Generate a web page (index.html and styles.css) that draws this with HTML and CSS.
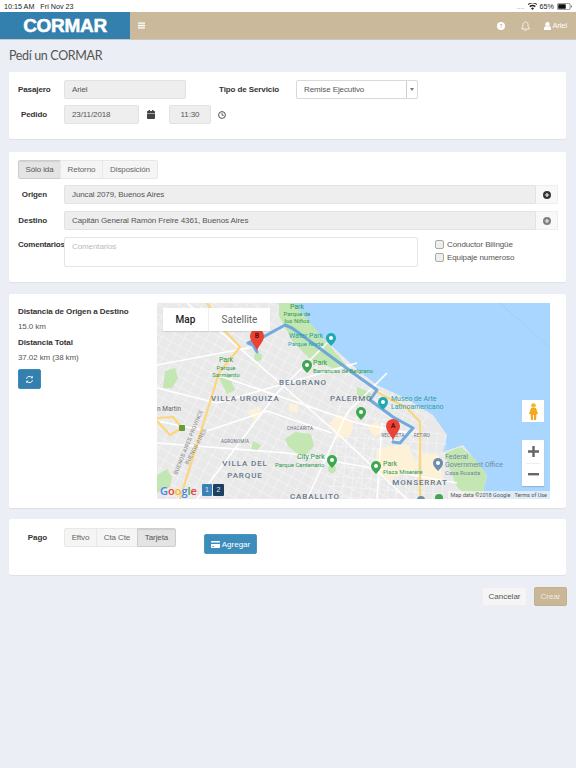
FILE: index.html
```html
<!DOCTYPE html>
<html lang="es">
<head>
  <meta charset="UTF-8" />
  <title>Pedí un CORMAR</title>
  <link rel="stylesheet" href="styles.css">
</head>
<body>

  <!-- iPad status bar -->
  <div class="status-bar">
    <span>10:15 AM&nbsp;&nbsp;&nbsp;Fri Nov 23</span>
    <span class="status-right">
      <span class="dots">....</span>
      <svg width="9" height="7" viewBox="0 0 18 14"><path d="M9 14l3-3.6a4.6 4.6 0 0 0-6 0zM4.500 8.600a7 7 0 0 1 9 0l2-2.400a10 10 0 0 0-13 0zM.5 3.800a13 13 0 0 1 17 0l1-1.300a15 15 0 0 0-19 0z" fill="#222"/></svg>
      65%
      <svg width="15" height="7" viewBox="0 0 30 14"><rect x=".7" y=".7" width="25.600" height="12.600" rx="3" fill="none" stroke="#444" stroke-width="1.2"/><rect x="2.500" y="2.500" width="15" height="9" rx="1" fill="#111"/><path d="M28 5v4c1 0 1.500-1 1.500-2s-.5-2-1.500-2z" fill="#444"/></svg>
    </span>
  </div>

  <!-- Header -->
  <header class="navbar">
    <div class="logo">CORMAR</div>
    <div class="nav-main">
      <svg class="bars" width="7" height="7" viewBox="0 0 14 14"><path d="M0 1h14v2.600H0zM0 5.700h14v2.600H0zM0 10.400h14V13H0z" fill="#fff"/></svg>
      <div class="nav-right">
        <svg width="8" height="8" viewBox="0 0 16 16"><circle cx="8" cy="8" r="8" fill="#fff"/><path d="M5.300 6.200C5.500 4.600 6.600 3.800 8.100 3.800c1.600 0 2.700.9 2.700 2.200 0 1.900-2.100 1.800-2.100 3.400H7.200c0-2.400 2-2.300 2-3.400 0-.6-.5-1-1.100-1-.7 0-1.100.4-1.300 1.200zM7.200 10.300h1.600v1.700H7.200z" fill="#cbb99c"/></svg>
        <svg width="9" height="10" viewBox="0 0 18 20"><path d="M9 2c-3 0-5 2-5 5 0 5-1 6-3 9h16c-2-3-3-4-3-9 0-3-2-5-5-5zM7 17.500c0 1 1 1.800 2 1.800s2-.8 2-1.800" fill="none" stroke="#fff" stroke-width="1.500"/></svg>
        <span class="nav-user">
          <svg width="7" height="8" viewBox="0 0 14 16"><circle cx="7" cy="4.500" r="4.300" fill="#fff"/><path d="M0 16v-3c0-3 2-5 4-5 1 .7 2 1 3 1s2-.3 3-1c2 0 4 2 4 5v3z" fill="#fff"/></svg>
          Ariel
        </span>
      </div>
    </div>
  </header>

  <div class="page">
    <h1>Pedí un CORMAR</h1>

    <!-- Pasajero -->
    <section class="panel panel-top">
      <div class="form-row">
        <label class="field-label">Pasajero</label>
        <div class="input disabled w-pasajero">Ariel</div>
        <label class="tipo-label">Tipo de Servicio</label>
        <div class="select-box">
          <span class="select-value">Remise Ejecutivo</span>
          <span class="select-arrow"></span>
        </div>
      </div>
      <div class="form-row">
        <label class="field-label short">Pedido</label>
        <div class="input disabled w-fecha">23/11/2018</div>
        <svg class="cal-icon" width="8" height="9" viewBox="0 0 16 18"><path d="M0 7h16v9.500c0 .8-.7 1.500-1.500 1.500h-13C.7 18 0 17.300 0 16.500zM1.500 2H3V0h3v2h4V0h3v2h1.500c.8 0 1.500.7 1.500 1.500V6H0V3.500C0 2.700.7 2 1.500 2z" fill="#444"/></svg>
        <div class="input disabled w-hora">11:30</div>
        <svg class="clock-icon" width="8" height="8" viewBox="0 0 16 16"><circle cx="8" cy="8" r="6.800" fill="none" stroke="#333" stroke-width="1.700"/><path d="M8 3.800V8.500h3.500" fill="none" stroke="#333" stroke-width="1.500"/></svg>
      </div>
    </section>

    <!-- Viaje -->
    <section class="panel panel-trip">
      <div class="btn-group">
        <span class="btn-opt active">Sólo ida</span>
        <span class="btn-opt w-retorno">Retorno</span>
        <span class="btn-opt w-dispo">Disposición</span>
      </div>
      <div class="form-row">
        <label class="field-label short">Origen</label>
        <div class="input-group">
          <div class="input disabled grow">Juncal 2079, Buenos Aires</div>
          <span class="addon">
            <svg width="8" height="8" viewBox="0 0 16 16"><circle cx="8" cy="8" r="8" fill="#333"/><path d="M6.800 3.800h2.400v3h3v2.400h-3v3H6.800v-3h-3V6.800h3z" fill="#eee"/></svg>
          </span>
        </div>
      </div>
      <div class="form-row">
        <label class="field-label short">Destino</label>
        <div class="input-group">
          <div class="input disabled grow">Capitán General Ramón Freire 4361, Buenos Aires</div>
          <span class="addon">
            <svg width="8" height="8" viewBox="0 0 16 16"><circle cx="8" cy="8" r="8" fill="#808080"/><path d="M6.800 3.800h2.400v3h3v2.400h-3v3H6.800v-3h-3V6.800h3z" fill="#eee"/></svg>
          </span>
        </div>
      </div>
      <div class="form-row comments-row">
        <label class="field-label comments-label">Comentarios</label>
        <div class="textarea">Comentarios</div>
        <div class="checks">
          <div class="check"><span class="check-box"></span>Conductor Bilingüe</div>
          <div class="check"><span class="check-box"></span>Equipaje numeroso</div>
        </div>
      </div>
    </section>

    <!-- Mapa -->
    <section class="panel panel-map">
      <div class="distance">
        <h4>Distancia de Origen a Destino</h4>
        <p>15.0 km</p>
        <h4>Distancia Total</h4>
        <p>37.02 km (38 km)</p>
        <button class="btn-refresh">
          <svg width="9" height="9" viewBox="0 0 18 18"><path d="M3 7.500A6.300 6.300 0 0 1 14 5M15 10.500A6.300 6.300 0 0 1 4 13" fill="none" stroke="#fff" stroke-width="2"/><path d="M15.500 1.500v5h-5zM2.500 16.500v-5h5z" fill="#fff"/></svg>
        </button>
      </div>

      <div class="map">
        <svg class="map-canvas" width="393" height="196" viewBox="0 0 393 196">
          <defs>
            <pattern id="streets-a" width="10" height="9" patternUnits="userSpaceOnUse" patternTransform="rotate(28)">
              <path d="M0 0H10M0 0V9" stroke="#fff" stroke-width=".7" fill="none"/>
            </pattern>
            <pattern id="streets-b" width="9" height="10" patternUnits="userSpaceOnUse" patternTransform="rotate(4)">
              <path d="M0 0H9M0 0V10" stroke="#fff" stroke-width=".7" fill="none"/>
            </pattern>
          </defs>

          <!-- land -->
          <rect width="393" height="196" fill="#a9d6fe"/>
          <path d="M0 0H121L136 12 166 35 203 69 220 82 250 96 276 112 290 132 286 149 306 142 330 172 326 189 330 196H0z" fill="#e9e9e9"/>
          <path d="M0 0H121L136 12 166 35 203 69 220 82 250 96 276 112 262 140 263 196H0z" fill="url(#streets-a)"/>
          <path d="M180 100L262 125 290 132 286 196H170z" fill="url(#streets-b)"/>

          <!-- parks -->
          <g fill="#c3e6b2">
            <path d="M288 150l16-6 14 12 12 16-4 17-14 5-12-10-8-20z"/>
            <path d="M122 0h14l30 35 24 28-14 2-22-8-18-18-14-26z"/>
            <path d="M8 68l10-3 3 10-6 10-9 0z"/>
            <path d="M128 136l10-7 16 2 3 12-9 10-10-4-7-6z"/>
            <path d="M62 75l10-2 6 14-8 4z"/>
            <circle cx="101" cy="54" r="4"/>
            <path d="M0 172l10-6 5 8-2 10-13 6z"/>
            <path d="M96 138l8 4-4 6-6-2z"/>
            <path d="M200 84l14 6-2 6-12-4z"/>
            <circle cx="175" cy="166" r="4"/>
          </g>

          <!-- blocks -->
          <g fill="#fdf1d8">
            <path d="M172 120l10-8 14 6-2 14-14 4z"/>
            <path d="M90 108l12-4 4 8-8 6z"/>
            <path d="M220 145l30-4 12 24-30 12-14-12z"/>
            <path d="M264 150l18 2 4 26-20 2z"/>
            <path d="M132 100l10 2-2 8-8-2z"/>
            <path d="M210 124l10-6 6 10-8 6z"/>
          </g>

          <!-- main roads -->
          <g fill="none" stroke="#fff" stroke-width="1.600">
            <path d="M0 62L96 44M30 0L100 60 180 130 250 196M60 72L200 120 262 132M0 140L130 150 300 180"/>
            <path d="M0 85L60 100 130 80 200 60M40 196L120 90 170 40M150 196L190 110 230 70M220 196L225 120"/>
            <path d="M0 118L50 128 110 108 175 130"/>
          </g>

          <!-- highways -->
          <g fill="none" stroke="#fcd67a" stroke-width="2.200" stroke-linejoin="round">
            <path d="M50 0L69 29 83 44 62 70 23 196"/>
            <path d="M0 115L16 114 25 125 13 132 0 118"/>
            <path d="M220 89L250 105 263 119 263 196"/>
          </g>
          <rect x="22" y="122" width="6" height="6" rx="1" fill="#6a9a3c"/>

          <!-- route -->
          <g fill="none" stroke="#66a4da" stroke-width="3" stroke-linejoin="round" stroke-linecap="round" opacity=".92">
            <path d="M100 49L96 42 91 40 108 33 128 22 135 25 203 75 220 87 213 97 236 114 256 125 243 140 236 139"/>
          </g>

          <!-- water details -->
          <path d="M343 0L393 45" stroke="#8fb9df" stroke-width=".6" stroke-dasharray="1.500 1.500" fill="none"/>

          <!-- place pins -->
          <g fill="#3fa652">
            <path d="M150 70c-4-4-5-6-5-8a5 5 0 0 1 10 0c0 2-1 4-5 8z"/>
            <path d="M175 165c-4-4-5-6-5-8a5 5 0 0 1 10 0c0 2-1 4-5 8z"/>
            <path d="M219 171c-4-4-5-6-5-8a5 5 0 0 1 10 0c0 2-1 4-5 8z"/>
            <path d="M204 117c-4-4-5-6-5-8a5 5 0 0 1 10 0c0 2-1 4-5 8z"/>
            <path d="M282 202c-3-3-4-5-4-7a4 4 0 0 1 8 0c0 2-1 4-4 7z"/>
          </g>
          <g fill="#1fa9b0">
            <path d="M174 43c-4-4-5-6-5-8a5 5 0 0 1 10 0c0 2-1 4-5 8z"/>
            <path d="M226 107c-4-4-5-6-5-8a5 5 0 0 1 10 0c0 2-1 4-5 8z"/>
          </g>
          <path d="M281 168c-4-4-5-6-5-8a5 5 0 0 1 10 0c0 2-1 4-5 8z" fill="#6b8fa8"/>
          <path d="M264 204c-3-3-4-5-4-7a4 4 0 0 1 8 0c0 2-1 4-4 7z" fill="#6b8fa8"/>
          <g fill="#fff">
            <circle cx="150" cy="62" r="2"/><circle cx="175" cy="157" r="2"/><circle cx="219" cy="163" r="2"/>
            <circle cx="204" cy="109" r="2"/><circle cx="174" cy="35" r="2"/><circle cx="226" cy="99" r="2"/><circle cx="281" cy="160" r="2"/>
          </g>

          <!-- labels -->
          <g class="lbl-park">
            <text x="140" y="6" text-anchor="middle">Park</text>
            <text x="140" y="13" text-anchor="middle" class="sm">Parque de</text>
            <text x="140" y="20" text-anchor="middle" class="sm">los Niños</text>
            <text x="156" y="62">Park</text>
            <text x="156" y="70" class="sm">Barrancas de Belgrano</text>
            <text x="69" y="59" text-anchor="middle">Park</text>
            <text x="69" y="67" text-anchor="middle" class="sm">Parque</text>
            <text x="69" y="74" text-anchor="middle" class="sm">Sarmiento</text>
            <text x="140" y="156">City Park</text>
            <text x="118" y="164" class="sm">Parque Centenario</text>
            <text x="226" y="162.500">Park</text>
            <text x="226" y="170.500" class="sm">Plaza Miserere</text>
          </g>
          <g class="lbl-teal">
            <text x="132" y="35">Water Park</text>
            <text x="131" y="43" class="sm">Parque Norte</text>
            <text x="234" y="98">Museo de Arte</text>
            <text x="234" y="106">Latinoamericano</text>
          </g>
          <g class="lbl-hood">
            <text x="146" y="82" text-anchor="middle">BELGRANO</text>
            <text x="54" y="98">VILLA URQUIZA</text>
            <text x="173" y="98">PALERMO</text>
            <text x="88" y="163" text-anchor="middle">VILLA DEL</text>
            <text x="88" y="175" text-anchor="middle">PARQUE</text>
            <text x="158" y="195.500" text-anchor="middle">CABALLITO</text>
            <text x="263" y="182" text-anchor="middle">MONSERRAT</text>
          </g>
          <g class="lbl-tiny">
            <text x="143" y="127" text-anchor="middle">CHACARITA</text>
            <text x="78" y="140" text-anchor="middle">AGRONOMÍA</text>
            <text x="236" y="134" text-anchor="middle">RECOLETA</text>
            <text x="265" y="134" text-anchor="middle">RETIRO</text>
          </g>
          <text x="0" y="108" class="lbl-town">n Martín</text>
          <text transform="translate(20 172) rotate(-68)" class="lbl-road">BUENOS AIRES PROVINCE</text>
          <text transform="translate(31 162) rotate(-62)" class="lbl-road">BUENOS AIRES</text>
          <g class="lbl-gov">
            <text x="288" y="156">Federal</text>
            <text x="288" y="164">Government Office</text>
            <text x="288" y="171.500" class="sm">Casa Rosada</text>
          </g>

          <!-- markers -->
          <path d="M100 48c-1-5-7-9-7-15a7 7 0 0 1 14 0c0 6-6 10-7 15z" fill="#ea4335"/>
          <text x="100" y="35" class="pin-letter">B</text>
          <path d="M236 138c-1-6-7-9-7-15a7 7 0 0 1 14 0c0 6-6 9-7 15z" fill="#ea4335"/>
          <text x="236" y="125" class="pin-letter">A</text>

          <text x="3" y="192" class="google"><tspan fill="#4285f4">G</tspan><tspan fill="#ea4335">o</tspan><tspan fill="#fbbc05">o</tspan><tspan fill="#4285f4">g</tspan><tspan fill="#34a853">l</tspan><tspan fill="#ea4335">e</tspan></text>
        </svg>

        <!-- map controls -->
        <div class="map-type">
          <span class="map-type-on">Map</span>
          <span class="map-type-off">Satellite</span>
        </div>
        <div class="pager"><span class="page-1">1</span><span class="page-2">2</span></div>
        <div class="pegman">
          <svg width="9" height="17" viewBox="0 0 9 17"><circle cx="4.500" cy="2.500" r="2.300" fill="#f5b51f"/><path d="M2 5h5l2 6H7.500L7 17H5v-5H4v5H2l-.5-6H0z" fill="#f5a81a"/></svg>
        </div>
        <div class="zoom-box">
          <span class="zoom-btn">
            <svg width="11" height="11" viewBox="0 0 11 11"><path d="M4.300 0h2.400v4.300H11v2.400H6.700V11H4.300V6.700H0V4.300h4.300z" fill="#666"/></svg>
          </span>
          <span class="zoom-btn zoom-minus">
            <svg width="11" height="3" viewBox="0 0 11 3"><path d="M0 0h11v2.400H0z" fill="#666"/></svg>
          </span>
        </div>
        <div class="attribution"><span>Map data ©2018 Google</span><span>Terms of Use</span></div>
      </div>
    </section>

    <!-- Pago -->
    <section class="panel panel-pay">
      <label class="field-label short pay-label">Pago</label>
      <div class="btn-group">
        <span class="btn-opt w-eftvo">Eftvo</span>
        <span class="btn-opt w-cta">Cta Cte</span>
        <span class="btn-opt active w-tarjeta">Tarjeta</span>
      </div>
      <button class="btn-add">
        <svg width="9" height="7" viewBox="0 0 18 14"><path d="M1.500 0h15c.8 0 1.500.7 1.500 1.500V3H0V1.500C0 .7.700 0 1.500 0zM0 6h18v6.500c0 .8-.7 1.500-1.500 1.500h-15C.7 14 0 13.300 0 12.500zM2.500 10v1.500h4V10z" fill="#fff"/></svg>
        Agregar
      </button>
    </section>

    <div class="actions">
      <button class="btn-cancel">Cancelar</button>
      <button class="btn-create">Crear</button>
    </div>
  </div>

</body>
</html>
```

FILE: styles.css
```css
* { margin: 0; padding: 0; box-sizing: border-box; }
body {
  width: 576px;
  height: 768px;
  overflow: hidden;
  background: #ebeef4;
  font-family: "Liberation Sans", Arial, sans-serif;
  font-size: 8px;
  letter-spacing: -0.1px;
  color: #555;
}

.status-bar {
  height: 12px;
  background: #fff;
  display: flex;
  justify-content: space-between;
  align-items: center;
  padding: 0 4px;
  font-size: 7.2px;
  letter-spacing: 0;
  color: #222;
}
.status-right { display: flex; align-items: center; gap: 3px; }
.dots { color: #999; }

.navbar { height: 28px; display: flex; border-bottom: 1px solid #c9c9c2; }
.logo {
  width: 130px;
  background: #337fad;
  color: #fff;
  font-size: 19px;
  font-weight: bold;
  letter-spacing: -0.3px;
  -webkit-text-stroke: 0.5px #fff;
  text-align: center;
  line-height: 27px;
}
.nav-main {
  flex: 1;
  background: #cbb99c;
  display: flex;
  justify-content: space-between;
  align-items: center;
  padding: 0 9px 0 8px;
}
.bars { display: block; }
.nav-right { display: flex; align-items: center; gap: 16px; color: #fff; font-size: 7.5px; }
.nav-user { display: flex; align-items: center; gap: 1px; margin-left: -2px; }

.page { padding: 0 10px 0 9px; }
h1 {
  height: 32px;
  font-family: Lato, "Open Sans", sans-serif;
  font-size: 12.5px;
  font-weight: 400;
  letter-spacing: -0.35px;
  line-height: 31px;
  color: #555;
}

.panel {
  background: #fff;
  border-radius: 2px;
  box-shadow: 0 1px 1px rgba(0,0,0,0.06);
}
.panel-top { height: 67px; padding: 8px 9px; margin-bottom: 13px; }
.panel-trip { height: 130px; padding: 8px 8px 0 9px; margin-bottom: 12px; }
.panel-map { height: 214px; padding: 9px 16px 9px 9px; margin-bottom: 11px; display: flex; }
.panel-pay { height: 56px; padding: 9px 0 0 9px; display: flex; align-items: flex-start; }

.form-row { display: flex; align-items: center; height: 19px; margin-bottom: 6px; }
.panel-trip .form-row { margin-bottom: 7px; }
.panel-trip .btn-group { margin-bottom: 6px; }
.field-label { width: 46px; font-weight: bold; color: #333; white-space: nowrap; flex-shrink: 0; }
.field-label.short { text-align: right; padding-right: 17px; }

.input {
  height: 19px;
  line-height: 17px;
  padding: 0 7px;
  border: 1px solid #e2e2e2;
  border-radius: 2px;
  background: #fff;
}
.input.disabled { background: #eee; }
.grow { flex: 1; border-radius: 2px 0 0 2px; }
.w-pasajero { width: 122px; }
.w-fecha { width: 75px; }
.w-hora { width: 42px; text-align: center; }
.cal-icon { margin: 0 14px 0 8px; }
.clock-icon { margin-left: 7px; }

.tipo-label { width: 77px; margin-left: 33px; font-weight: bold; color: #333; }
.select-box {
  width: 122px;
  height: 19px;
  display: flex;
  border: 1px solid #d9d9d9;
  border-radius: 2px;
}
.select-value { flex: 1; padding-left: 7px; line-height: 17px; }
.select-arrow {
  width: 11px;
  border-left: 1px solid #cfcfcf;
  position: relative;
}
.select-arrow::after {
  content: "";
  position: absolute;
  left: 3px;
  top: 7px;
  border: 2px solid transparent;
  border-top: 3px solid #777;
}

.btn-group { display: flex; height: 19px; }
.btn-opt {
  width: 42px;
  background: #f5f5f5;
  border: 1px solid #e8e8e8;
  margin-left: -1px;
  text-align: center;
  line-height: 17px;
  color: #666;
}
.btn-opt:first-child { margin-left: 0; border-radius: 2px 0 0 2px; width: 43px; }
.btn-opt:last-child { border-radius: 0 2px 2px 0; }
.btn-opt.active { background: #e4e4e4; border-color: #cdcdcd; box-shadow: inset 0 1px 1px rgba(0,0,0,0.08); color: #555; }
.w-retorno { width: 43px; }
.w-dispo { width: 56px; }
.btn-opt.w-eftvo { width: 33px; }
.w-cta { width: 42px; }
.w-tarjeta { width: 39px; }

.input-group { flex: 1; display: flex; }
.addon {
  width: 22px;
  height: 19px;
  background: #f8f8f8;
  border: 1px solid #eee;
  border-left: 0;
  display: flex;
  align-items: center;
  justify-content: center;
}

.comments-row { align-items: flex-start; height: 30px; }
.comments-label { margin-top: 3px; letter-spacing: -0.2px; }
.textarea {
  width: 354px;
  height: 30px;
  padding: 4px 7px;
  border: 1px solid #e4e4e4;
  border-radius: 2px;
  color: #bbb;
}
.checks { margin-left: 17px; padding-top: 1px; }
.check { display: flex; align-items: center; height: 13px; color: #555; white-space: nowrap; }
.check-box {
  width: 9px;
  height: 9px;
  margin-right: 3px;
  border: 1px solid #aaa;
  border-radius: 2px;
  background: #eee;
}

.distance { width: 139px; flex-shrink: 0; padding-top: 4px; }
.distance h4 { font-size: 8px; color: #333; line-height: 10px; margin-bottom: 5px; }
.distance p { line-height: 10px; margin-bottom: 6px; }
.btn-refresh {
  width: 23px;
  height: 20px;
  margin-top: 2px;
  background: #337fad;
  border: 1px solid #3d8bbb;
  border-radius: 2px;
  display: flex;
  align-items: center;
  justify-content: center;
}

.map { position: relative; width: 393px; height: 196px; overflow: hidden; letter-spacing: 0; }
.map-canvas { display: block; font-family: Roboto, sans-serif; }
.lbl-park text { font-size: 7px; fill: #2f9a4a; }
.lbl-park text.sm { font-size: 6px; }
.lbl-teal text { font-size: 7px; fill: #2aa0a6; }
.lbl-teal text.sm { font-size: 6px; }
.lbl-hood text { font-size: 8px; font-weight: 500; letter-spacing: 0.9px; fill: #69788c; }
.lbl-tiny text { font-size: 4.5px; fill: #5f6b78; letter-spacing: 0.2px; }
.lbl-town { font-size: 6.5px; fill: #666; }
.lbl-road { font-size: 5.5px; fill: #808080; letter-spacing: 0.2px; }
.lbl-gov text { font-size: 7px; fill: #6e8a9e; }
.lbl-gov text.sm { font-size: 6px; }
.pin-letter { font-size: 7px; font-weight: 700; fill: #5c0f08; text-anchor: middle; }
.google { font-family: "Open Sans", sans-serif; font-size: 11px; font-weight: 600; }

.map-type {
  position: absolute;
  left: 6px;
  top: 5px;
  width: 107px;
  height: 23px;
  display: flex;
  background: #fff;
  font-family: Roboto, sans-serif;
  font-size: 10px;
  line-height: 23px;
  text-align: center;
  box-shadow: 0 1px 1px rgba(0,0,0,0.1);
}
.map-type-on { width: 46px; color: #222; font-weight: 500; border-right: 1px solid #eee; }
.map-type-off { flex: 1; color: #666; }

.pager { position: absolute; left: 45px; top: 181px; display: flex; font-size: 7px; color: #dfe8f0; line-height: 12px; text-align: center; }
.page-1 { width: 10px; height: 12px; background: #3a82b5; border-radius: 1px; margin-right: 1px; }
.page-2 { width: 11px; height: 12px; background: #1e4060; border-radius: 1px; }

.pegman {
  position: absolute;
  left: 365px;
  top: 97px;
  width: 22px;
  height: 22px;
  background: #fff;
  display: flex;
  align-items: center;
  justify-content: center;
}
.zoom-box {
  position: absolute;
  left: 365px;
  top: 137px;
  width: 22px;
  height: 46px;
  background: #fff;
  box-shadow: 0 1px 1px rgba(0,0,0,0.15);
}
.zoom-btn { height: 23px; display: flex; align-items: center; justify-content: center; }
.zoom-minus { border-top: 1px solid #eee; height: 22px; margin: 0 4px; }

.attribution {
  position: absolute;
  right: 0;
  bottom: 0;
  height: 8px;
  display: flex;
  gap: 4px;
  padding: 0 3px;
  background: rgba(245,245,245,0.7);
  font-size: 5.5px;
  line-height: 8px;
  color: #555;
  font-family: Roboto, sans-serif;
}

.pay-label { line-height: 19px; }
.btn-add {
  width: 53px;
  height: 20px;
  margin: 6px 0 0 28px;
  background: #3c8cbc;
  border: 1px solid #4a94c0;
  border-radius: 2px;
  color: #fff;
  font-family: inherit;
  font-size: 8px;
  display: flex;
  align-items: center;
  justify-content: center;
  gap: 2px;
}

.actions { display: flex; justify-content: flex-end; gap: 7px; margin-top: 12px; margin-right: -1px; }
.btn-cancel, .btn-create {
  height: 19px;
  border-radius: 2px;
  font-family: inherit;
  font-size: 8px;
}
.btn-cancel { width: 45px; background: #f5f5f5; border: 1px solid #eee; color: #555; }
.btn-create { width: 33px; background: #c9b797; border: 1px solid #c2b08f; color: #f1ebdf; }
```
